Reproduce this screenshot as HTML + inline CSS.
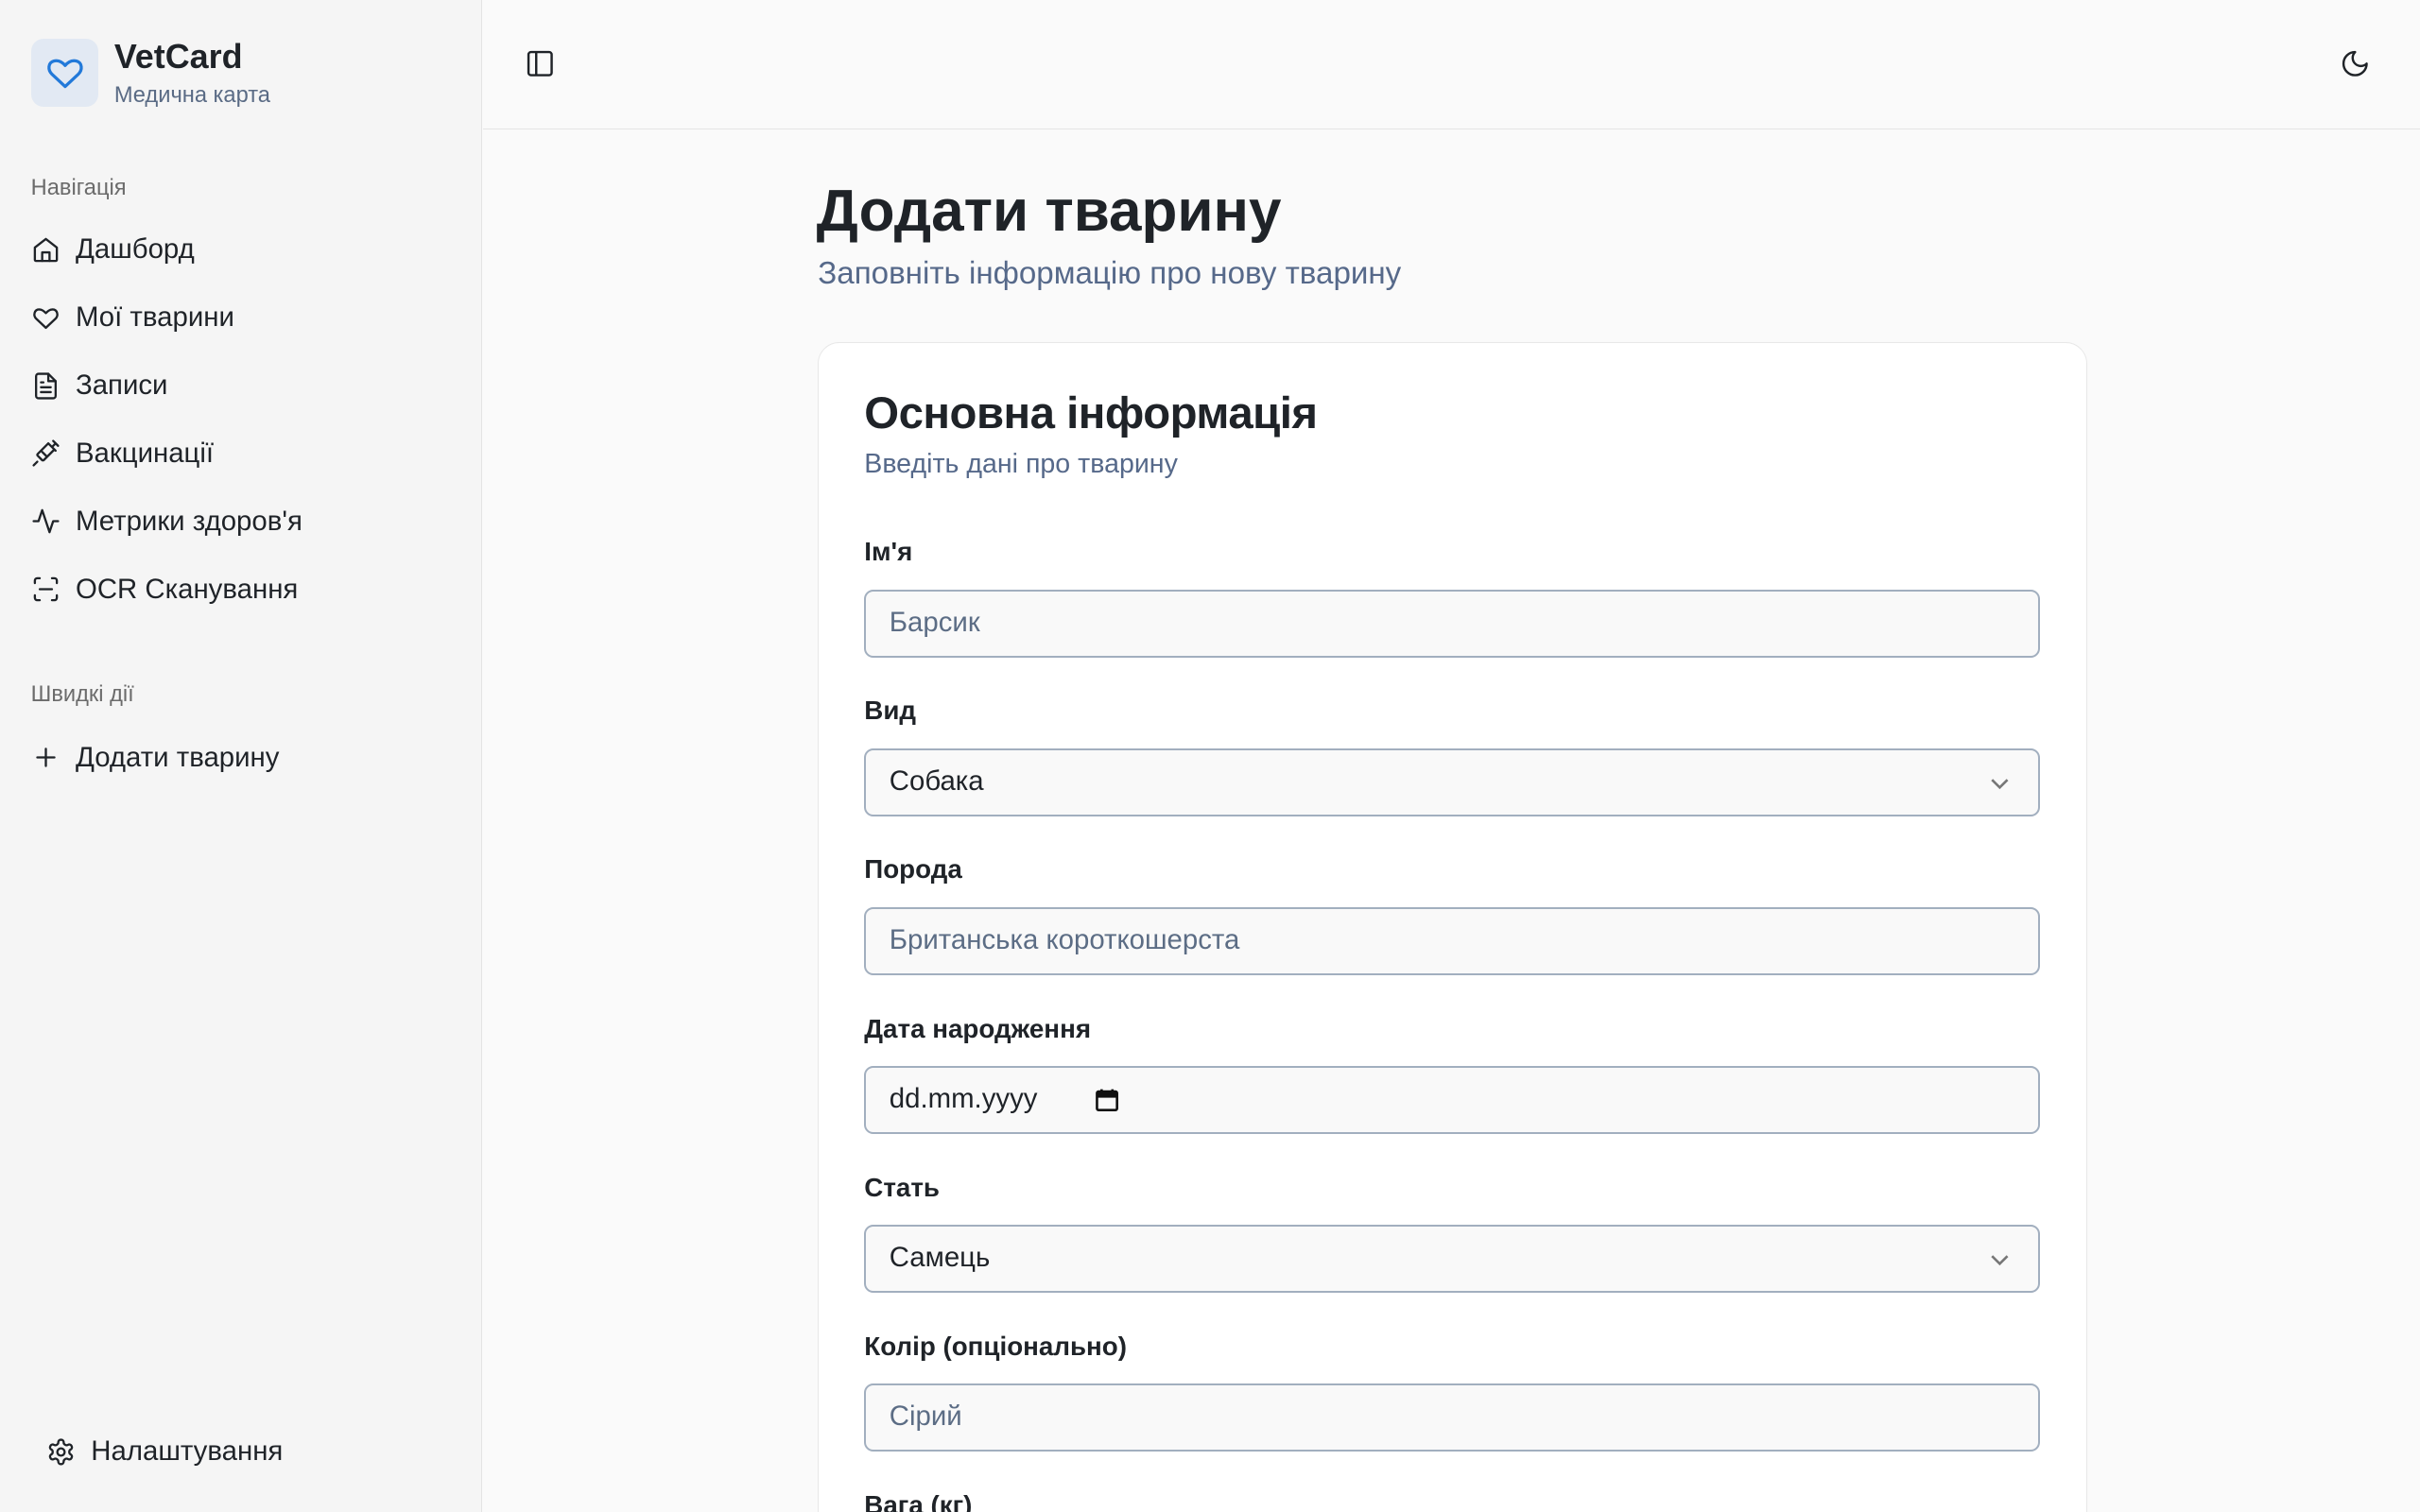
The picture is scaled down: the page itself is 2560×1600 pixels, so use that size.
<!DOCTYPE html>
<html><head><meta charset="utf-8">
<style>
html,body{margin:0;padding:0;width:2560px;height:1600px;overflow:hidden;background:#fafafa}
#w{zoom:1.632653;width:1568px;height:980px;position:relative;font-family:"Liberation Sans","DejaVu Sans",sans-serif;color:#1f2328;overflow:hidden}
.abs{position:absolute}
.side{left:0;top:0;width:312px;height:980px;background:#f5f5f5;border-right:1px solid #e4e4e4}
.logo{left:20px;top:25px;width:44px;height:44px;border-radius:8px;background:#e2e9f3}
.nav{position:absolute;left:20px;font-size:18px;color:#1f2328;display:flex;align-items:center;height:24px}
.nav svg{width:19px;height:19px;margin-right:10px;fill:none;stroke:#1f2328;stroke-width:1.8;stroke-linecap:round;stroke-linejoin:round}
.sec{position:absolute;left:20px;font-size:14.5px;color:#6b6b6b}
.hdr{left:313px;top:0;width:1255px;height:83px;border-bottom:1px solid #e4e4e4;background:#fafafa}
.card{left:530px;top:222px;width:821px;height:800px;background:#fff;border:1px solid #e8e8e8;border-radius:14px}
.lbl{position:absolute;left:560px;font-size:17px;font-weight:bold;color:#1f2328}
.inp{position:absolute;left:560px;width:762px;height:44px;border:1.5px solid #a2afbf;border-radius:6px;background:#f9f9f9;font-size:18px;line-height:41px;padding-left:15px;box-sizing:border-box;color:#1f2328}
.ph{color:#5c6d85}
.chev{position:absolute;right:18px;top:14px}
</style></head><body><div id="w">
<div class="abs side"></div>
<div class="abs logo"><svg width="44" height="44" viewBox="0 0 44 44"><path d="M22 31 L13.5 23 C10.5 20 11 15.5 14.5 14.5 C17.5 13.6 20 15 22 17.3 C24 15 26.5 13.6 29.5 14.5 C33 15.5 33.5 20 30.5 23 Z" fill="none" stroke="#2279d9" stroke-width="2" stroke-linejoin="round"/></svg></div>
<div class="abs" style="left:74px;top:24px;font-size:22px;font-weight:bold">VetCard</div>
<div class="abs" style="left:74px;top:54px;font-size:14.5px;color:#5a6b85">Медична карта</div>
<div class="sec" style="top:114px">Навігація</div>
<div class="nav" style="top:150px"><svg viewBox="0 0 24 24"><path d="M3 10l9-7 9 7v10a1 1 0 0 1-1 1H4a1 1 0 0 1-1-1z"/><path d="M9 21v-7h6v7"/></svg>Дашборд</div>
<div class="nav" style="top:194px"><svg viewBox="0 0 24 24"><path d="M12 20l-8-7.5C1.5 10 2.5 5 6.5 5 9 5 10.5 6.5 12 8c1.5-1.5 3-3 5.5-3 4 0 5 5 2.5 7.5z"/></svg>Мої тварини</div>
<div class="nav" style="top:238px"><svg viewBox="0 0 24 24"><path d="M14 2H6a2 2 0 0 0-2 2v16a2 2 0 0 0 2 2h12a2 2 0 0 0 2-2V8z"/><path d="M14 2v6h6M8 13h8M8 17h8M8 9h2"/></svg>Записи</div>
<div class="nav" style="top:282px"><svg viewBox="0 0 24 24"><path d="M18 2l4 4M17 7l3-3M19 9l-8.7 8.7c-.4.4-1 .4-1.4 0L5.3 14.1c-.4-.4-.4-1 0-1.4L14 4M9 11l4 4M5 19l-3 3M14 4l6 6"/></svg>Вакцинації</div>
<div class="nav" style="top:326px"><svg viewBox="0 0 24 24"><path d="M22 12h-4l-3 9L9 3l-3 9H2"/></svg>Метрики здоров'я</div>
<div class="nav" style="top:370px"><svg viewBox="0 0 24 24"><path d="M3 7V5a2 2 0 0 1 2-2h2M17 3h2a2 2 0 0 1 2 2v2M21 17v2a2 2 0 0 1-2 2h-2M7 21H5a2 2 0 0 1-2-2v-2M7 12h10"/></svg>OCR Сканування</div>
<div class="sec" style="top:442px">Швидкі дії</div>
<div class="nav" style="top:479px"><svg viewBox="0 0 24 24"><path d="M12 5v14M5 12h14"/></svg>Додати тварину</div>
<div class="nav" style="top:929px;left:30px"><svg viewBox="0 0 24 24"><circle cx="12" cy="12" r="3"/><path d="M12.2 2h-.4a2 2 0 0 0-2 2v.2a2 2 0 0 1-1 1.7l-.4.3a2 2 0 0 1-2 0l-.2-.1a2 2 0 0 0-2.7.7l-.2.4a2 2 0 0 0 .7 2.7l.2.1a2 2 0 0 1 1 1.7v.5a2 2 0 0 1-1 1.7l-.2.1a2 2 0 0 0-.7 2.7l.2.4a2 2 0 0 0 2.7.7l.2-.1a2 2 0 0 1 2 0l.4.3a2 2 0 0 1 1 1.7v.2a2 2 0 0 0 2 2h.4a2 2 0 0 0 2-2v-.2a2 2 0 0 1 1-1.7l.4-.3a2 2 0 0 1 2 0l.2.1a2 2 0 0 0 2.7-.7l.2-.4a2 2 0 0 0-.7-2.7l-.2-.1a2 2 0 0 1-1-1.7v-.5a2 2 0 0 1 1-1.7l.2-.1a2 2 0 0 0 .7-2.7l-.2-.4a2 2 0 0 0-2.7-.7l-.2.1a2 2 0 0 1-2 0l-.4-.3a2 2 0 0 1-1-1.7V4a2 2 0 0 0-2-2z"/></svg>Налаштування</div>

<div class="abs hdr"></div>
<svg class="abs" style="left:340px;top:31px" width="20" height="20" viewBox="0 0 24 24" fill="none" stroke="#1f2328" stroke-width="1.8" stroke-linejoin="round"><rect x="3" y="3" width="18" height="18" rx="2"/><path d="M9 3v18"/></svg>
<svg class="abs" style="left:1516px;top:31px" width="20" height="20" viewBox="0 0 24 24" fill="none" stroke="#1f2328" stroke-width="1.8" stroke-linejoin="round"><path d="M12 3a6 6 0 0 0 9 9 9 9 0 1 1-9-9z"/></svg>

<div class="abs" style="left:529px;top:115px;font-size:38px;font-weight:bold;color:#1f2328">Додати тварину</div>
<div class="abs" style="left:530px;top:166px;font-size:20.3px;color:#56698a">Заповніть інформацію про нову тварину</div>

<div class="abs card"></div>
<div class="abs" style="left:560px;top:251px;font-size:29px;font-weight:bold;color:#1f2328;letter-spacing:-0.3px">Основна інформація</div>
<div class="abs" style="left:560px;top:291px;font-size:17.5px;color:#56698a">Введіть дані про тварину</div>

<div class="lbl" style="top:348px">Ім'я</div>
<div class="inp" style="top:382px"><span class="ph">Барсик</span></div>
<div class="lbl" style="top:451px">Вид</div>
<div class="inp" style="top:485px">Собака<svg class="chev" width="14" height="14" viewBox="0 0 14 14" fill="none" stroke="#777" stroke-width="1.6"><path d="M2 5l5 5 5-5"/></svg></div>
<div class="lbl" style="top:554px">Порода</div>
<div class="inp" style="top:588px"><span class="ph">Британська короткошерста</span></div>
<div class="lbl" style="top:657px">Дата народження</div>
<div class="inp" style="top:691px">dd.mm.yyyy<svg style="position:absolute;left:148px;top:13px" width="16" height="16" viewBox="0 0 16 16"><rect x="1.5" y="2.5" width="13" height="12" rx="1" fill="none" stroke="#111" stroke-width="1.6"/><rect x="1.5" y="2.5" width="13" height="4" fill="#111"/><path d="M4.5 1v3M11.5 1v3" stroke="#111" stroke-width="1.6"/></svg></div>
<div class="lbl" style="top:760px">Стать</div>
<div class="inp" style="top:794px">Самець<svg class="chev" width="14" height="14" viewBox="0 0 14 14" fill="none" stroke="#777" stroke-width="1.6"><path d="M2 5l5 5 5-5"/></svg></div>
<div class="lbl" style="top:863px">Колір (опціонально)</div>
<div class="inp" style="top:897px"><span class="ph">Сірий</span></div>
<div class="lbl" style="top:966px">Вага (кг)</div>
</div></body></html>
